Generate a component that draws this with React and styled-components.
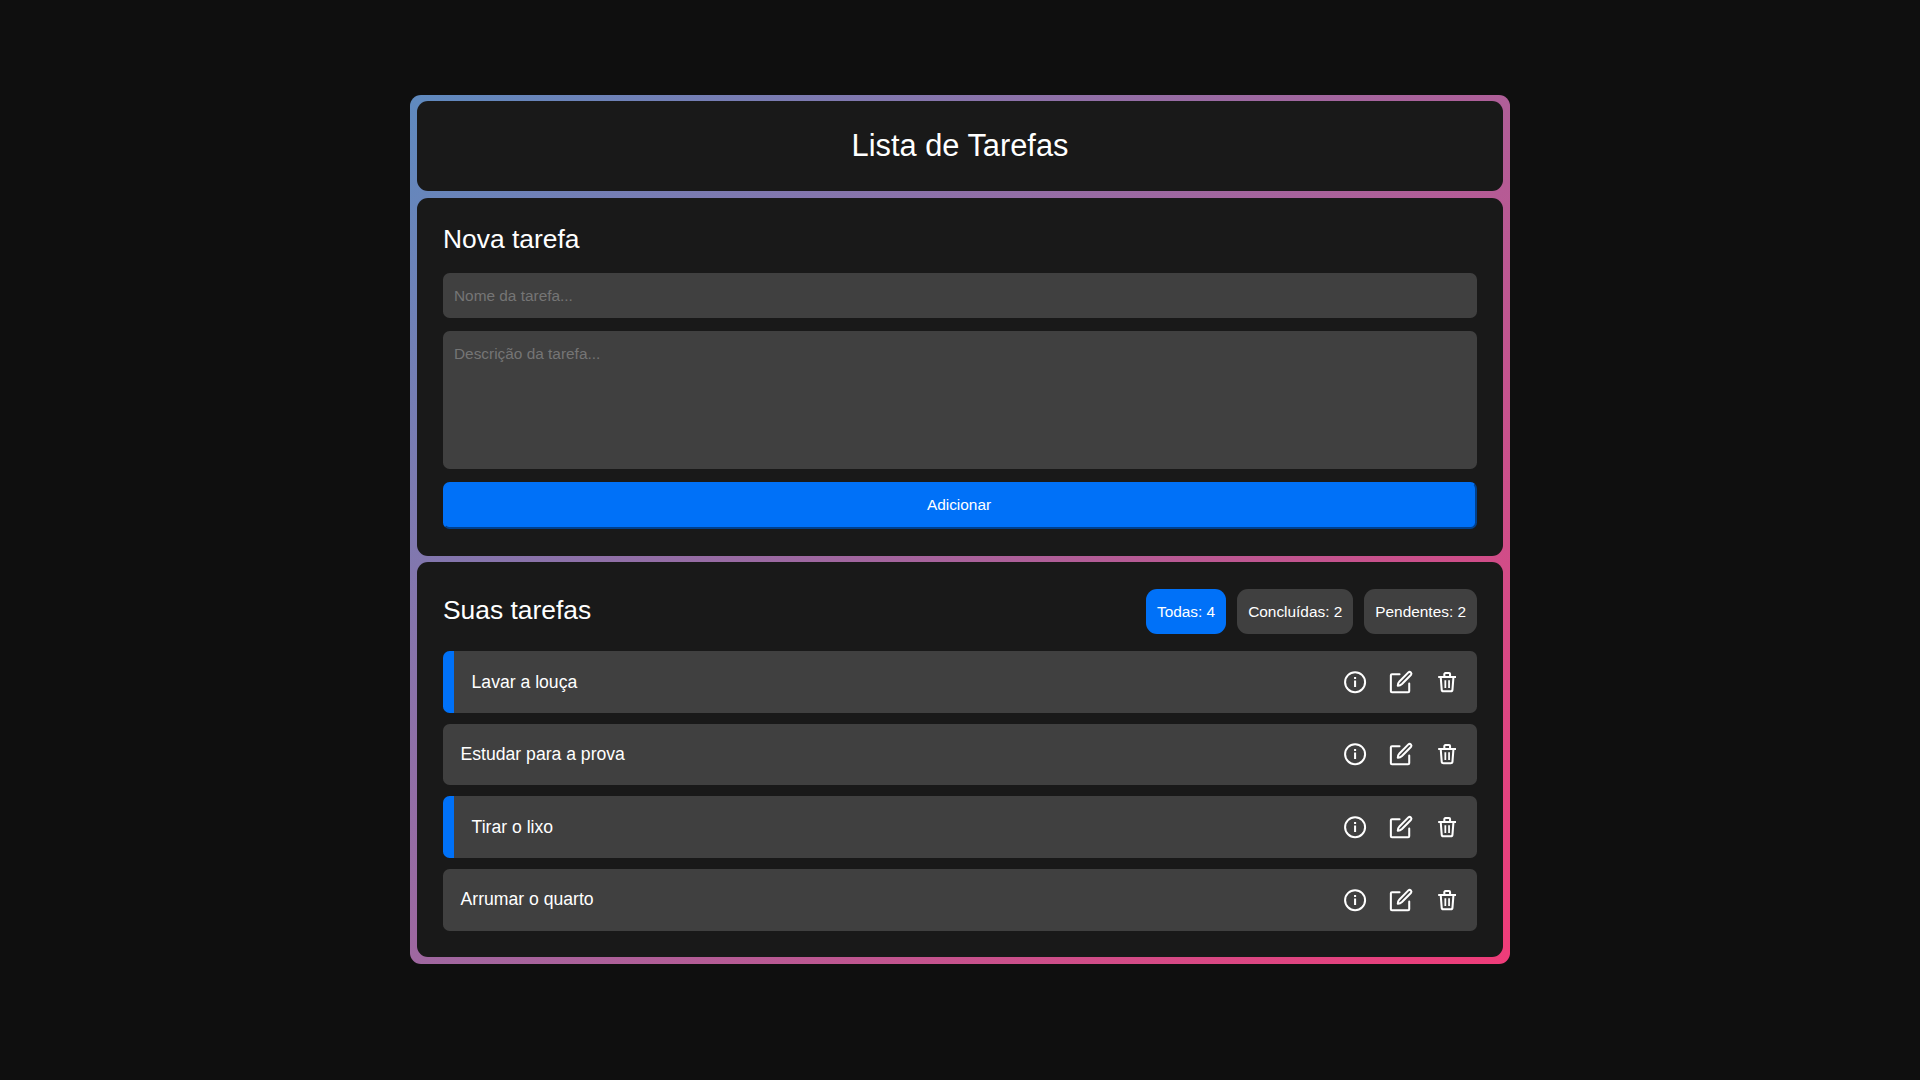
import React from "react";
import styled, { createGlobalStyle } from "styled-components";

const GlobalStyle = createGlobalStyle`
  * { margin: 0; padding: 0; box-sizing: border-box; }
  body {
    background: #0f0f0f;
    color: #fff;
    font-family: "Liberation Sans", Arial, sans-serif;
  }
`;

const Page = styled.main`
  min-height: 100vh;
  display: flex;
  flex-direction: column;
  align-items: center;
  padding-top: 94.6px;
`;

const Frame = styled.div`
  width: 1100px;
  display: flex;
  flex-direction: column;
  gap: 6.6px;
  padding: 6.6px 6.6px 6.8px;
  border-radius: 11px;
  background: linear-gradient(135deg, #5f8abf, #ef3c79);
`;

const Card = styled.section`
  display: flex;
  flex-direction: column;
  padding: 26.4px;
  border-radius: 11px;
  background: #191919;
`;

const TitleCard = styled(Card)`
  height: 90px;
  align-items: center;
  justify-content: center;
  padding: 0 0 2px;
`;

const Title = styled.h1`
  font-size: 30.8px;
  font-weight: 400;
  line-height: 35px;
`;

const Subtitle = styled.h2`
  font-size: 26.4px;
  font-weight: 400;
  line-height: 30px;
`;

const Form = styled.form`
  display: flex;
  flex-direction: column;
  gap: 13.2px;
  margin-top: 18.6px;
`;

const fieldStyle = `
  width: 100%;
  border: none;
  outline: none;
  border-radius: 6.6px;
  padding: 11px;
  background: #404040;
  color: #fff;
  font-family: inherit;
  font-size: 15.4px;
  &::placeholder { color: #757575; }
`;

const Input = styled.input`
  ${fieldStyle}
  height: 45px;
  padding-top: 13px;
`;

const Textarea = styled.textarea`
  ${fieldStyle}
  display: block;
  height: 138.2px;
  padding-top: 14px;
  resize: none;
`;

const SubmitButton = styled.button`
  height: 46.8px;
  border: 2px solid;
  border-color: #0071f8 #00408c #00408c #0071f8;
  border-radius: 6.6px;
  padding: 0 2px 1px 0;
  background: #0071f8;
  color: #fff;
  font-family: inherit;
  font-size: 15.4px;
`;

const ListHeader = styled.header`
  display: flex;
  align-items: center;
  justify-content: space-between;
  height: 45px;
  margin-bottom: 17.65px;

  h2 { padding-bottom: 2px; }
`;

const Filters = styled.div`
  display: flex;
  gap: 11px;
`;

const Filter = styled.button`
  height: 45px;
  padding: 1px 11px 0;
  border: none;
  border-radius: 11px;
  background: ${({ $active }) => ($active ? "#0071f8" : "#404040")};
  color: #fff;
  font-family: inherit;
  font-size: 15.4px;
`;

const TaskList = styled.ul`
  display: flex;
  flex-direction: column;
  gap: 11px;
  list-style: none;
`;

const Task = styled.li`
  display: flex;
  align-items: center;
  justify-content: space-between;
  height: 61.6px;
  padding: 0 17.1px 0 17.6px;
  border-left: ${({ $done }) => ($done ? "11px solid #0071f8" : "none")};
  border-radius: 6.6px;
  background: #404040;
`;

const TaskName = styled.p`
  padding-top: 0.4px;
  font-size: 17.6px;
`;

const Actions = styled.div`
  display: flex;
  gap: 19.4px;
`;

const Icon = styled.svg`
  display: block;
  width: 26.4px;
  height: 26.4px;
  fill: none;
  stroke: #fff;
  stroke-width: 1.85;
  stroke-linejoin: round;
`;

const InfoIcon = () => (
  <Icon viewBox="0 0 24 24">
    <circle cx="11.9" cy="12" r="9.1" />
    <path d="M11.900 10.400v6M11.900 7.300v1.700" />
  </Icon>
);

const EditIcon = () => (
  <Icon viewBox="0.3 0 24 24" strokeLinecap="round">
    <path d="M10.800 4.700H3.900a1 1 0 0 0-1 1v14.500a1 1 0 0 0 1 1h14.700a1 1 0 0 0 1-1v-7" />
    <path d="M18.800 3.100a1.700 1.700 0 0 1 2.300 0 1.700 1.700 0 0 1 0 2.300L13 13.700q-1.700 1.600-3.800 1.500-.1-2.200 1.500-3.900z" />
  </Icon>
);

const TrashIcon = () => (
  <Icon viewBox="0.2 0 24 24">
    <path d="M4 7.200h16.200M6.300 7.200l.9 11.600a1.600 1.600 0 0 0 1.600 1.500h6.600a1.600 1.600 0 0 0 1.600-1.500l.9-11.600M9.600 7V4.600a.9.900 0 0 1 .9-.9h3.400a.9.900 0 0 1 .9.900V7" />
    <path strokeWidth="1.6" d="M10.500 10.200v7M13.900 10.200v7" />
  </Icon>
);

const filters = ["Todas: 4", "Concluídas: 2", "Pendentes: 2"];

const tasks = [
  { name: "Lavar a louça", done: true },
  { name: "Estudar para a prova", done: false },
  { name: "Tirar o lixo", done: true },
  { name: "Arrumar o quarto", done: false },
];

export default function App() {
  return (
    <Page>
      <GlobalStyle />
      <Frame>
        <TitleCard as="header">
          <Title>Lista de Tarefas</Title>
        </TitleCard>
        <Card>
          <Subtitle>Nova tarefa</Subtitle>
          <Form>
            <Input placeholder="Nome da tarefa..." />
            <Textarea placeholder="Descrição da tarefa..." />
            <SubmitButton type="button">Adicionar</SubmitButton>
          </Form>
        </Card>
        <Card>
          <ListHeader>
            <Subtitle>Suas tarefas</Subtitle>
            <Filters>
              {filters.map((label, i) => (
                <Filter key={label} $active={i === 0}>{label}</Filter>
              ))}
            </Filters>
          </ListHeader>
          <TaskList>
            {tasks.map(({ name, done }) => (
              <Task key={name} $done={done}>
                <TaskName>{name}</TaskName>
                <Actions>
                  <InfoIcon />
                  <EditIcon />
                  <TrashIcon />
                </Actions>
              </Task>
            ))}
          </TaskList>
        </Card>
      </Frame>
    </Page>
  );
}
